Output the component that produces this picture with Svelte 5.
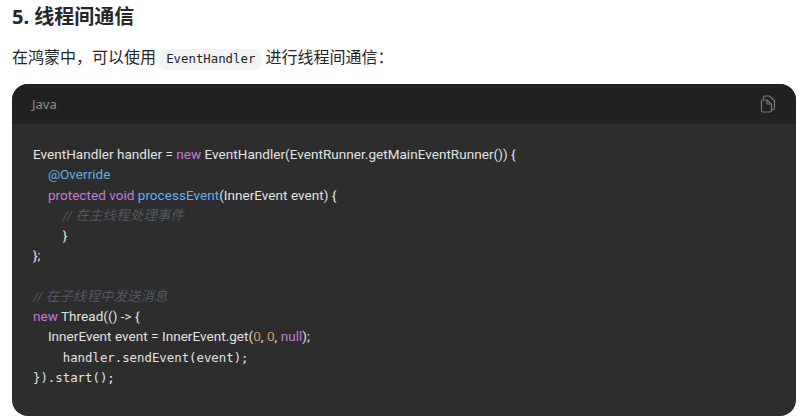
<script>
  // each token: [class, text]; "i" is the monospace indent
  const lines = [
    [["", "EventHandler handler = "], ["kw", "new"], ["", " EventHandler(EventRunner.getMainEventRunner()) {"]],
    [["i", "  "], ["fn", "@Override"]],
    [["i", "  "], ["kw", "protected void"], ["", " "], ["fn", "processEvent"], ["", "(InnerEvent event) {"]],
    [["i", "    "], ["cm", "// 在主线程处理事件"]],
    [["i", "    "], ["", "}"]],
    [["", "};"]],
    [["", " "]],
    [["cm", "// 在子线程中发送消息"]],
    [["kw", "new"], ["", " Thread(() -> {"]],
    [["i", "  "], ["", "InnerEvent event = InnerEvent.get("], ["num", "0"], ["", ", "], ["num", "0"], ["", ", "], ["kw", "null"], ["", ");"]],
    [["i", "    handler.sendEvent(event);"]],
    [["i", "}).start();"]]
  ];
</script>

<main>
  <h3>5. 线程间通信</h3>
  <p>在鸿蒙中，可以使用 <code>EventHandler</code> 进行线程间通信：</p>
  <div class="card">
    <div class="head">
      <span>Java</span>
      <svg width="16" height="18" viewBox="0 0 16 18" fill="none" stroke="#7d7d7d" stroke-width="1.1">
        <path d="M3.5 4.5 V2.5 Q3.5 1 5 1 H9.5 L14.5 5.5 V13 Q14.5 14.5 13 14.5 H12" />
        <path d="M2.5 5 H7 L11.5 9 V15.5 Q11.5 17 10 17 H3 Q1.5 17 1.5 15.5 V6 Q1.5 5 2.5 5 Z" />
        <path d="M7 5 V9 H11.5" />
      </svg>
    </div>
    <pre>{#each lines as line}<div class="line">{#each line as t}<span class={t[0]}>{t[1]}</span>{/each}</div>{/each}</pre>
  </div>
</main>

<style>
  :global(body) {
    background: #fff;
  }

  main {
    padding: 0 6px 0 12px;
    font-family: "Noto Sans", "Noto Sans CJK SC", sans-serif;
    color: #262626;
  }

  h3 {
    margin: 0;
    padding-top: 3px;
    font-size: 20px;
    line-height: 28px;
    font-weight: 700;
  }

  p {
    margin: 13px 0 0;
    font-size: 16px;
    line-height: 26px;
  }

  code {
    display: inline-block;
    padding: 0 6px;
    height: 21px;
    line-height: 21px;
    border-radius: 6px;
    background: #f2f3f5;
    font-family: "DejaVu Sans Mono", monospace;
    font-size: 12.35px;
  }

  .card {
    margin-top: 14px;
    border-radius: 16px;
    overflow: hidden;
    background: #2d2d2d;
    height: 332px;
  }

  .head {
    height: 40px;
    padding: 0 20px;
    background: #212121;
    display: flex;
    align-items: center;
    justify-content: space-between;
    color: #8c8c8c;
    font-size: 13px;
  }

  pre {
    margin: 0;
    padding: 20px 21px;
    font-family: Roboto, "Noto Sans CJK SC", sans-serif;
    font-size: 13.5px;
    letter-spacing: 0.04px;
    color: #e3e3e3;
  }

  .line {
    height: 20.25px;
    line-height: 20.25px;
    white-space: pre;
  }

  .i {
    font-family: "DejaVu Sans Mono", monospace;
    font-size: 12.35px;
    letter-spacing: 0;
  }

  .kw {
    color: #c678dd;
  }

  .fn {
    color: #61aeee;
  }

  .num {
    color: #d19a66;
  }

  .cm {
    color: #525862;
    font-style: italic;
  }
</style>
